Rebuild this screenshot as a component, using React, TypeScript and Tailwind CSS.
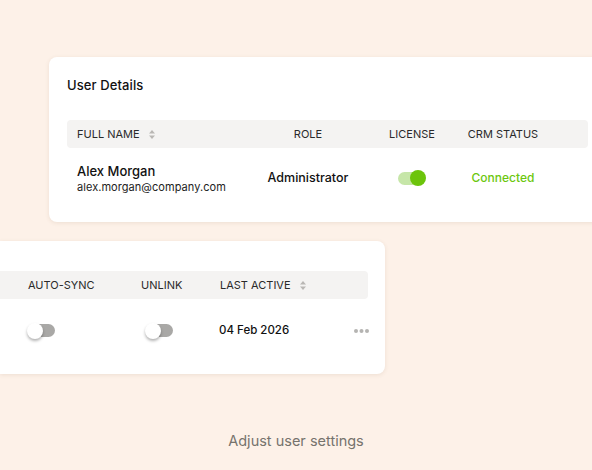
import React from "react";

const font = { fontFamily: "Inter, 'Noto Sans', sans-serif" };

function SortIcon() {
  return (
    <svg width="8" height="11" viewBox="0 0 8 11" className="inline-block">
      <path d="M4 1 L7 4.5 H1 Z" fill="#b9b7b4" />
      <path d="M4 10 L7 6.5 H1 Z" fill="#b9b7b4" />
    </svg>
  );
}

function ToggleOn() {
  return (
    <div className="relative w-[28px] h-[16px] flex items-center">
      <div className="w-[24px] h-[13px] rounded-full bg-[#c6e6a8]" />
      <div className="absolute right-0 top-0 w-[16px] h-[16px] rounded-full bg-[#6cc40b]" />
    </div>
  );
}

function ToggleOff() {
  return (
    <div className="relative w-[28px] h-[16px] flex items-center">
      <div className="ml-[3px] w-[25px] h-[13px] rounded-full bg-[#a9a8a6]" />
      <div className="absolute left-0 top-0 w-[16px] h-[16px] rounded-full bg-white shadow-[0_2px_3px_rgba(0,0,0,0.3)]" />
    </div>
  );
}

function Dots() {
  return (
    <svg width="15" height="4" viewBox="0 0 15 4">
      <circle cx="2" cy="2" r="2" fill="#b5b4b2" />
      <circle cx="7.5" cy="2" r="2" fill="#b5b4b2" />
      <circle cx="13" cy="2" r="2" fill="#b5b4b2" />
    </svg>
  );
}

export default function App() {
  return (
    <div
      className="w-[592px] h-[470px] bg-[#fdf1e8] overflow-hidden flex flex-col"
      style={font}
    >
      <div className="ml-[49px] mt-[57px] w-[560px] h-[165px] bg-white rounded-[8px] shadow-[0_1px_4px_rgba(120,90,60,0.12)] pt-[20px] pl-[18px] shrink-0">
        <div className="text-[13px] font-medium text-[#111] leading-[16px] tracking-[0.1px]">User Details</div>
        <div className="mt-[27px] h-[28px] w-[521px] bg-[#f4f3f2] rounded-[4px] grid grid-cols-[191px_100px_108px_74px] items-center text-[11px] text-[#2a2a2a] uppercase">
          <div className="pl-[10px] flex items-center gap-[8px]">
            <span>Full Name</span>
            <SortIcon />
          </div>
          <div className="text-center">Role</div>
          <div className="text-center">License</div>
          <div className="text-center">CRM Status</div>
        </div>
        <div className="h-[60px] w-[521px] grid grid-cols-[191px_100px_108px_74px] items-center">
          <div className="pl-[10px] pt-[1px]">
            <div className="text-[13px] font-medium text-[#111] leading-[18px]">Alex Morgan</div>
            <div className="text-[11px] text-[#222] leading-[15px] tracking-[0.05px]">alex.morgan@company.com</div>
          </div>
          <div className="text-center text-[12.5px] font-medium text-[#111]">Administrator</div>
          <div className="flex justify-center">
            <ToggleOn />
          </div>
          <div className="text-center text-[12px] font-medium text-[#6cc70e]">Connected</div>
        </div>
      </div>

      <div className="mt-[19px] w-[385px] h-[133px] bg-white rounded-r-[8px] shadow-[0_1px_4px_rgba(120,90,60,0.12)] pt-[30px] shrink-0">
        <div className="h-[28px] w-[368px] bg-[#f4f3f2] rounded-r-[4px] grid grid-cols-[28px_113px_79px_134px_14px] items-center text-[11px] text-[#2a2a2a] uppercase">
          <div />
          <div>Auto-sync</div>
          <div>Unlink</div>
          <div className="flex items-center gap-[8px]">
            <span>Last Active</span>
            <SortIcon />
          </div>
          <div />
        </div>
        <div className="h-[62px] w-[370px] grid grid-cols-[27px_118px_74px_135px_16px] items-center">
          <div />
          <div className="pt-[1px]"><ToggleOff /></div>
          <div className="pt-[1px]"><ToggleOff /></div>
          <div className="text-[11.5px] font-medium text-[#111] pt-[1px]">04 Feb 2026</div>
          <div className="flex items-center pt-[1px]">
            <Dots />
          </div>
        </div>
      </div>

      <div className="mt-[58px] text-center text-[14.5px] text-[#76736d] leading-[18px]">
        Adjust user settings
      </div>
    </div>
  );
}
